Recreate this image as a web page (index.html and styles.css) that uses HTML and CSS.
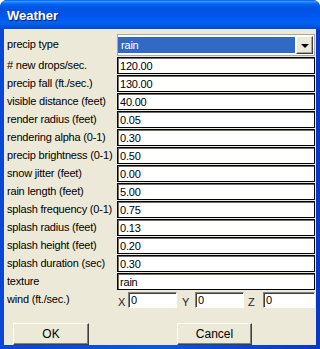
FILE: index.html
```html
<!DOCTYPE html>
<html lang="en">
<head>
  <meta charset="UTF-8" />
  <title>Weather</title>
  <link rel="stylesheet" href="styles.css">
</head>
<body>

<div class="window">
  <div class="titlebar">Weather</div>

  <div class="client">
    <div class="form">
      <div class="label tall">precip type</div>
      <div class="combo">
        <div class="combo-value">rain</div>
        <div class="combo-btn"><span class="arrow"></span></div>
      </div>

      <div class="label"># new drops/sec.</div>
      <input class="field" type="text" value="120.00">

      <div class="label">precip fall (ft./sec.)</div>
      <input class="field" type="text" value="130.00">

      <div class="label">visible distance (feet)</div>
      <input class="field" type="text" value="40.00">

      <div class="label">render radius (feet)</div>
      <input class="field" type="text" value="0.05">

      <div class="label">rendering alpha (0-1)</div>
      <input class="field" type="text" value="0.30">

      <div class="label">precip brightness (0-1)</div>
      <input class="field" type="text" value="0.50">

      <div class="label">snow jitter (feet)</div>
      <input class="field" type="text" value="0.00">

      <div class="label">rain length (feet)</div>
      <input class="field" type="text" value="5.00">

      <div class="label">splash frequency (0-1)</div>
      <input class="field" type="text" value="0.75">

      <div class="label">splash radius (feet)</div>
      <input class="field" type="text" value="0.13">

      <div class="label">splash height (feet)</div>
      <input class="field" type="text" value="0.20">

      <div class="label">splash duration (sec)</div>
      <input class="field" type="text" value="0.30">

      <div class="label">texture</div>
      <input class="field" type="text" value="rain">

      <div class="label">wind (ft./sec.)</div>
      <div class="wind">
        <span class="axis ax-x">X</span>
        <input class="wfield w-x" type="text" value="0">
        <span class="axis ax-y">Y</span>
        <input class="wfield w-y" type="text" value="0">
        <span class="axis ax-z">Z</span>
        <input class="wfield w-z" type="text" value="0">
      </div>
    </div>

    <div class="buttons">
      <button class="btn btn-ok">OK</button>
      <button class="btn btn-cancel">Cancel</button>
    </div>
  </div>
</div>

</body>
</html>
```

FILE: styles.css
```css
* { box-sizing: border-box; }

body {
  margin: 0;
  background: #fff;
  font-family: "Liberation Sans", Arial, sans-serif;
  font-size: 11px;
  letter-spacing: -0.2px;
  color: #000;
}

.window {
  width: 320px;
  height: 349px;
  display: flex;
  flex-direction: column;
  background: linear-gradient(to right, #0a46d8, #0b55e6 50%, #0838c4);
  border-radius: 7px 7px 0 0;
  overflow: hidden;
}

.titlebar {
  flex: none;
  height: 29px;
  padding: 2px 0 0 7px;
  display: flex;
  align-items: center;
  color: #fff;
  font-size: 13px;
  font-weight: bold;
  letter-spacing: 0;
  text-shadow: 1px 1px #0f1f7a;
  background: linear-gradient(to bottom, #0058ee 0%, #3a93ff 5%, #1f84ff 8%, #0470fc 12%, #0262ee 16%, #0057e5 22%, #0054e3 30%, #0055eb 56%, #005bf5 66%, #0262f0 78%, #0058e2 88%, #004ccc 100%);
}

.client {
  flex: 1;
  margin: 0 4px 4px 4px;
  background: #ece9d8;
  padding: 5px 1px 0 3px;
}

.form {
  display: grid;
  grid-template-columns: 110px 198px;
  row-gap: 1px;
}

.label {
  height: 17px;
  line-height: 17px;
  white-space: nowrap;
}

.label.tall {
  height: 22px;
  line-height: 20px;
}

.combo {
  height: 22px;
  display: flex;
  border: 1px solid #a7a6aa;
  background: #fff;
  padding: 1px 1px 1px 0;
}

.combo-value {
  flex: 1;
  margin: 1px 1px 1px 0;
  background: #316ac5;
  color: #fff;
  padding-left: 3px;
  line-height: 17px;
}

.combo-btn {
  width: 17px;
  display: flex;
  align-items: center;
  justify-content: center;
  background: #ece9d8;
  border: 1px solid;
  border-color: #fff #404040 #404040 #fff;
  box-shadow: inset -1px -1px #aca899;
}

.arrow {
  width: 0;
  height: 0;
  border-left: 4px solid transparent;
  border-right: 4px solid transparent;
  border-top: 4px solid #000;
  margin-top: 1px;
}

.field {
  width: 100%;
  height: 17px;
  margin: 0;
  border: 1px solid #000;
  box-shadow: inset 1px 1px #6d6d6d;
  background: #fff;
  padding: 0 2px;
  font: inherit;
  letter-spacing: inherit;
  color: #000;
  outline: none;
}

.wind {
  display: flex;
  height: 17px;
  align-items: center;
}

.axis {
  height: 17px;
  line-height: 17px;
  padding-top: 3px;
  color: #222;
}

.ax-x { width: 11px; padding-left: 1px; }
.ax-y { width: 18px; padding-left: 5px; }
.ax-z { width: 19px; padding-left: 4px; }

.wfield {
  height: 16px;
  margin: 0;
  border: 1px solid;
  border-color: #848284 #fff #fff #848284;
  box-shadow: inset 1px 1px #404040;
  background: #fff;
  padding: 0 2px;
  font: inherit;
  letter-spacing: inherit;
  color: #000;
  outline: none;
}

.w-x { width: 49px; }
.w-y { width: 49px; }
.w-z { width: 52px; }

.buttons {
  display: flex;
  margin-top: 15px;
}

.btn {
  height: 22px;
  background: #ece9d8;
  border: 1px solid;
  border-color: #fff #404040 #404040 #fff;
  box-shadow: inset -1px -1px #808080;
  font: inherit;
  font-size: 12px;
  color: #000;
  padding: 0;
}

.btn-ok {
  width: 76px;
  margin-left: 6px;
}

.btn-cancel {
  width: 75px;
  margin-left: 88px;
}
```
